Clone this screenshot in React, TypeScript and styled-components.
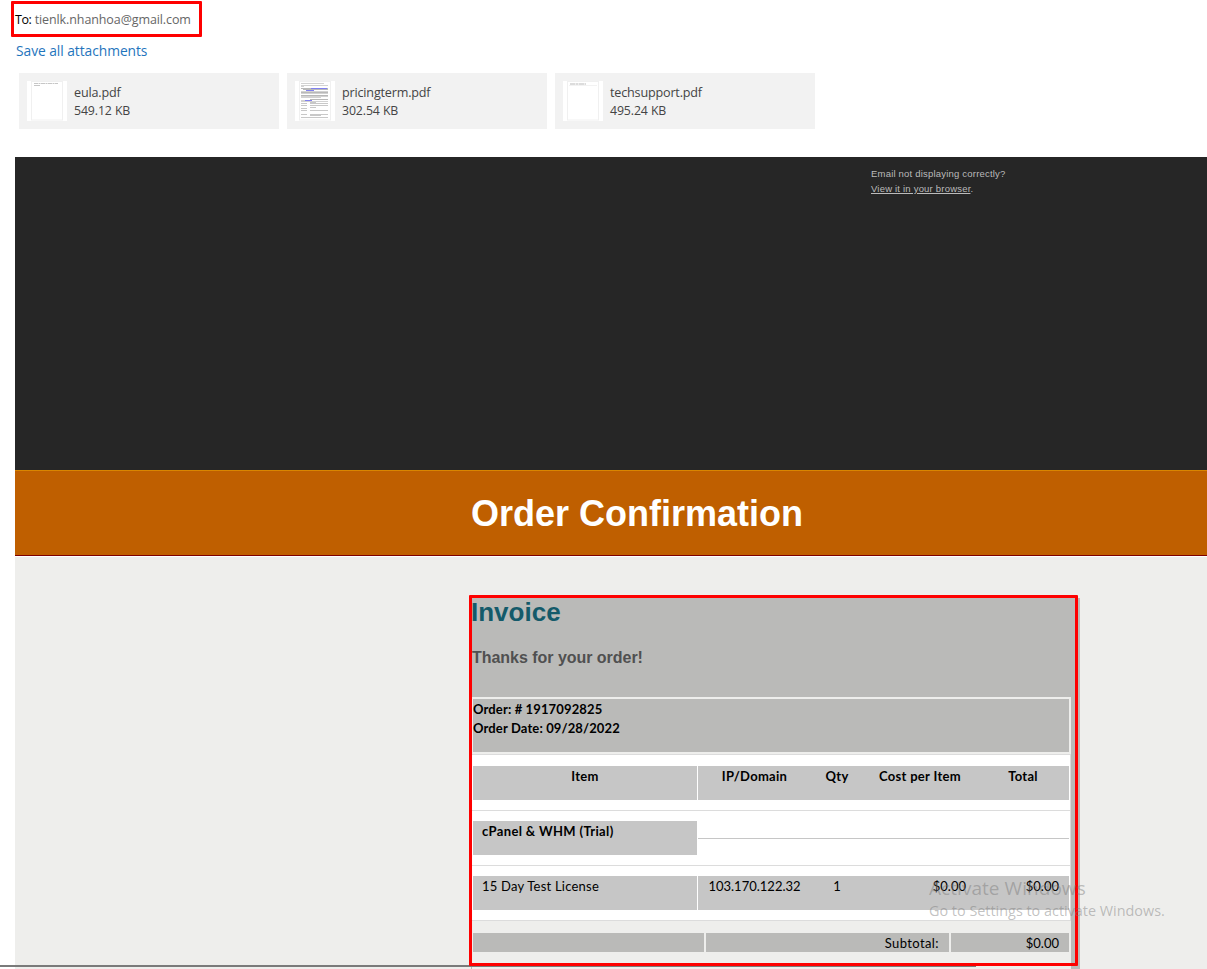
import React from "react";
import styled, { createGlobalStyle } from "styled-components";

const GlobalStyle = createGlobalStyle`
  * { box-sizing: border-box; }
  html, body { margin: 0; padding: 0; background: #fff; }
  body { width: 1207px; height: 969px; overflow: hidden; }
`;

const ui = `"Open Sans", "Noto Sans", sans-serif`;
const arial = `"Liberation Sans", Arial, sans-serif`;
const calibri = `Lato, "Open Sans", sans-serif`;

const Page = styled.main`
  position: relative;
  width: 1207px;
  height: 969px;
  overflow: hidden;
  display: flex;
  flex-direction: column;
  font-family: ${ui};
  white-space: nowrap;
`;

const MailHeader = styled.header`
  height: 157px;
  padding: 10px 0 0 15px;
  flex: none;
`;

const Recipient = styled.div`
  height: 20px;
  font-size: 12.5px;
  line-height: 20px;
  letter-spacing: -0.1px;
  color: #666;
`;

const RecipientLabel = styled.span`
  color: #000;
  letter-spacing: -0.4px;
`;

const SaveLink = styled.a`
  display: block;
  margin: 11px 0 0 1px;
  height: 20px;
  font-size: 13.8px;
  line-height: 20px;
  letter-spacing: -0.05px;
  color: #1f75bd;
`;

const Attachments = styled.div`
  display: flex;
  gap: 8px;
  margin: 12px 0 0 4px;
`;

const Card = styled.div`
  display: flex;
  width: 260px;
  height: 56px;
  padding: 8px;
  background: #f2f2f2;
`;

const CardText = styled.div`
  margin: 3px 0 0 7px;
  font-size: 12.6px;
  line-height: 18px;
  color: #444;
`;

const FileName = styled.div`
  letter-spacing: -0.18px;
`;

const FileSize = styled.div`
  letter-spacing: -0.1px;
  font-size: 12.3px;
`;

const Email = styled.section`
  margin-left: 15px;
  flex: 1;
  display: flex;
  flex-direction: column;
  background: #eeeeec;
`;

const Preheader = styled.div`
  height: 313px;
  flex: none;
  padding: 9px 0 0 856px;
  background: #262626;
  color: #bbb;
  font: 9.5px/15px ${arial};
  letter-spacing: 0.2px;
`;

const Banner = styled.div`
  height: 87px;
  flex: none;
  padding: 1px 0 0 456px;
  border-top: 1px solid #d98500;
  border-bottom: 1px solid #fff;
  box-shadow: inset 0 -1px 0 #7f0000;
  background: #bf5f00;
`;

const Title = styled.h1`
  margin: 0;
  font: bold 36px/84px ${arial};
  color: #fff;
`;

const Invoice = styled.div`
  flex: 1;
  width: 609px;
  margin: 41px 0 0 456px;
  padding-left: 1px;
  background: #babab8;
`;

const InvoiceTitle = styled.h2`
  margin: 0 0 0 -1px;
  font: bold 26px/28px ${arial};
  color: #145a6a;
`;

const Thanks = styled.h3`
  margin: 21px 0 0;
  height: 50px;
  font: bold 16px/21px ${arial};
  letter-spacing: -0.03px;
  color: #505050;
`;

const Table = styled.div`
  width: 599px;
  background: #eeeeec;
  font: 13px/19px ${calibri};
  color: #000;
`;

const OrderFrame = styled.div`
  padding: 2px 2px 2px 1px;
`;

const OrderInfo = styled.div`
  height: 53px;
  padding-top: 1px;
  background: #babab8;
  font-weight: bold;
  letter-spacing: 0.13px;
`;

const Lines = styled.div`
  border: solid #dcdcdc;
  border-width: 1px 1px 0 0;
  background: #fff;
`;

const LineRow = styled.div`
  display: grid;
  grid-template-columns: 224px 371px;
  gap: 1px;
  height: 55px;
  padding: 10px 1px;
  border-bottom: 1px solid #dcdcdc;
`;

const HeadRow = styled(LineRow)`
  height: 56px;
  padding-top: 11px;
  font-weight: bold;
  letter-spacing: 0.3px;
  text-align: center;
`;

const ItemCell = styled.div<{ $bold?: boolean }>`
  height: 34px;
  padding: 1px 9px;
  background: #c6c6c6;
  font-weight: ${(p) => (p.$bold ? "bold" : "normal")};
  letter-spacing: ${(p) => (p.$bold ? 0.35 : 0.22)}px;
`;

const DetailCells = styled.div`
  display: grid;
  grid-template-columns: 113px 52px 114px 92px;
  height: 34px;
  padding-top: 1px;
  background: #c6c6c6;
`;

const EmptyCells = styled.div`
  height: 18px;
  border-bottom: 1px solid #c6c6c6;
`;

const Amount = styled.div<{ $right: number }>`
  text-align: right;
  padding-right: ${(p) => p.$right}px;
`;

const Centered = styled.div`
  text-align: center;
`;

const Totals = styled.div`
  display: grid;
  grid-template-columns: 231px 243px 118px;
  gap: 2px;
  padding: 12px 0 20px 1px;
`;

const TotalCell = styled.div<{ $spacing?: number }>`
  height: 19px;
  padding-right: 10px;
  text-align: right;
  line-height: 20px;
  letter-spacing: ${(p) => p.$spacing ?? 0}px;
  background: #babab8;
`;

const Marker = styled.div<{ $x: number; $y: number; $w: number; $h: number }>`
  position: absolute;
  left: ${(p) => p.$x}px;
  top: ${(p) => p.$y}px;
  width: ${(p) => p.$w}px;
  height: ${(p) => p.$h}px;
  border: 3px solid #fe0000;
  border-radius: 1px;
`;

const WindowEdge = styled.div`
  position: absolute;
  left: 0;
  top: 965px;
  width: 976px;
  height: 2px;
  background: #7a7a7a;
`;

const Watermark = styled.div`
  position: absolute;
  left: 929px;
  top: 876px;
  color: rgba(120, 120, 120, 0.45);
  font-size: 14.4px;
  line-height: 20px;
  letter-spacing: 0;
`;

const WatermarkTitle = styled.div`
  font-size: 19px;
  line-height: 25px;
  letter-spacing: 0.05px;
`;

type Kind = "eula" | "pricing" | "support";

function Thumb({ kind }: { kind: Kind }) {
  return (
    <svg width="40" height="40" viewBox="0 0 40 40">
      <rect width="40" height="40" fill="#fff" />
      <rect x="4.5" y="0.5" width="31" height="38.5" fill="#fff" stroke="#f0f0f0" />
      {kind === "eula" && (
        <g stroke="#c6c6c6">
          <path d="M7 2.5H31" strokeDasharray="4 .5 2 .5" />
          <path d="M7 4.5H13" />
        </g>
      )}
      {kind === "support" && (
        <g>
          <path d="M7 3H23" stroke="#dcdcdc" strokeWidth="2" strokeDasharray="5 .5 3 .5" />
          <path d="M6 4.5H34" stroke="#f2f2f2" />
        </g>
      )}
      {kind === "pricing" && (
        <g fill="none">
          <path d="M6 2.5H29M6 4.5H33M6 5.5H9M6 10.5H33M6 12.5H33M6 15.5H33M6 16.5H26M6 19.5H10M6 20.5H33" stroke="#d2d2d2" />
          <path d="M6 7.5H33M8 8.5H33M6 11.5H33M6 14.5H33M15 18.5H33" stroke="#b8b8b8" />
          <path d="M16 7.5H32M11 9.5H19M10 19.5H17" stroke="#8080f0" />
          <path d="M6 22.5H12M15 21.5H21M15 22.5H33M6 24.5H12M15 24.5H33M6 27.5H12M15 26.5H21M15 29.5H33M6 29.5H12M6 33.5H12M15 33.5H33M15 34.5H26M6 36.5H33" stroke="#c8c8c8" />
        </g>
      )}
    </svg>
  );
}

const files: { name: string; size: string; kind: Kind }[] = [
  { name: "eula.pdf", size: "549.12 KB", kind: "eula" },
  { name: "pricingterm.pdf", size: "302.54 KB", kind: "pricing" },
  { name: "techsupport.pdf", size: "495.24 KB", kind: "support" },
];

export default function App() {
  return (
    <Page>
      <GlobalStyle />
      <MailHeader>
        <Recipient>
          <RecipientLabel>To:</RecipientLabel> tienlk.nhanhoa@gmail.com
        </Recipient>
        <SaveLink>Save all attachments</SaveLink>
        <Attachments>
          {files.map((f) => (
            <Card key={f.name}>
              <Thumb kind={f.kind} />
              <CardText>
                <FileName>{f.name}</FileName>
                <FileSize>{f.size}</FileSize>
              </CardText>
            </Card>
          ))}
        </Attachments>
      </MailHeader>
      <Email>
        <Preheader>
          Email not displaying correctly?
          <br />
          <u>View it in your browser</u>.
        </Preheader>
        <Banner>
          <Title>Order Confirmation</Title>
        </Banner>
        <Invoice>
          <InvoiceTitle>Invoice</InvoiceTitle>
          <Thanks>Thanks for your order!</Thanks>
          <Table>
            <OrderFrame>
              <OrderInfo>
                <div>Order: # 1917092825</div>
                <div>Order Date: 09/28/2022</div>
              </OrderInfo>
            </OrderFrame>
            <Lines>
              <HeadRow>
                <ItemCell $bold>Item</ItemCell>
                <DetailCells>
                  <Centered>IP/Domain</Centered>
                  <Centered>Qty</Centered>
                  <Centered>Cost per Item</Centered>
                  <Centered>Total</Centered>
                </DetailCells>
              </HeadRow>
              <LineRow>
                <ItemCell $bold>cPanel &amp; WHM (Trial)</ItemCell>
                <EmptyCells />
              </LineRow>
              <LineRow>
                <ItemCell>15 Day Test License</ItemCell>
                <DetailCells>
                  <Centered>103.170.122.32</Centered>
                  <Centered>1</Centered>
                  <Amount $right={11}>$0.00</Amount>
                  <Amount $right={10}>$0.00</Amount>
                </DetailCells>
              </LineRow>
            </Lines>
            <Totals>
              <TotalCell />
              <TotalCell $spacing={0.4}>Subtotal:</TotalCell>
              <TotalCell>$0.00</TotalCell>
            </Totals>
          </Table>
        </Invoice>
      </Email>
      <WindowEdge />
      <Marker $x={11} $y={1} $w={191} $h={36} />
      <Marker $x={469} $y={595} $w={609} $h={371} />
      <Watermark>
        <WatermarkTitle>Activate Windows</WatermarkTitle>
        Go to Settings to activate Windows.
      </Watermark>
    </Page>
  );
}
